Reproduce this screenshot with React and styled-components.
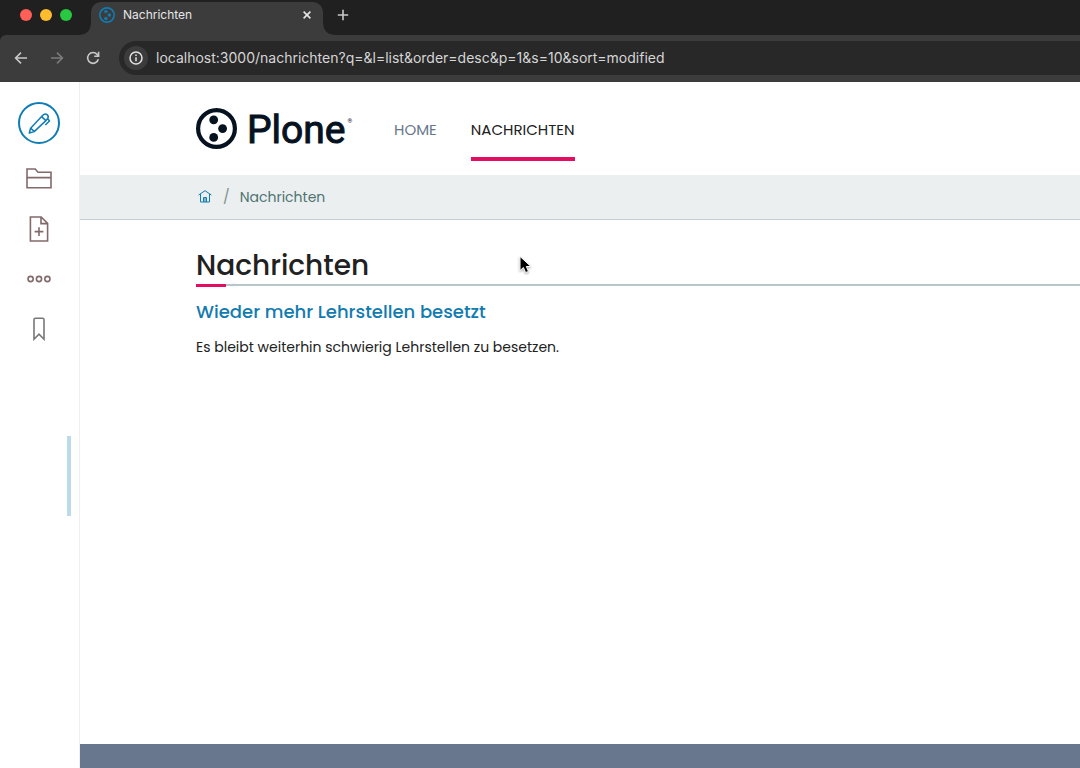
import React from 'react';
import styled, { createGlobalStyle, css } from 'styled-components';

const GlobalStyle = createGlobalStyle`
  *, *::before, *::after { box-sizing: border-box; }
  body {
    margin: 0;
    background: #fff;
    color: #212121;
    font-family: Poppins, Inter, "Open Sans", sans-serif;
    -webkit-font-smoothing: antialiased;
  }
  h1, h2, p, ol { margin: 0; padding: 0; }
  button { font: inherit; border: 0; padding: 0; background: none; color: inherit; cursor: pointer; }
  a { color: inherit; text-decoration: none; }
  svg { display: block; flex: none; }
`;

const Window = styled.div`
  min-height: 100vh;
  display: flex;
  flex-direction: column;
  overflow: hidden;
`;

const Chrome = styled.header`
  font-family: Inter, sans-serif;
  background: #202020;
`;

const TabStrip = styled.div`
  height: 35px;
  display: flex;
  padding-left: 20px;
`;

const Lights = styled.div`
  display: flex;
  gap: 8px;
  padding-top: 9px;
  width: 71px;
`;

const Light = styled.button`
  width: 12px;
  height: 12px;
  border-radius: 50%;
  background: ${(p) => p.$color};
`;

const Tab = styled.div`
  position: relative;
  width: 232px;
  margin-top: 2px;
  padding: 0 10px 8px 8px;
  display: flex;
  align-items: center;
  gap: 8px;
  border-radius: 10px 10px 0 0;
  background: #3c3c3c;
  color: #e6e6e6;
  font-size: 12px;
  line-height: 16px;

  &::before, &::after {
    content: "";
    position: absolute;
    bottom: 0;
    width: 10px;
    height: 10px;
  }
  &::before {
    right: 100%;
    background: radial-gradient(circle at 0 0, transparent 9px, #3c3c3c 10px);
  }
  &::after {
    left: 100%;
    background: radial-gradient(circle at 100% 0, transparent 9px, #3c3c3c 10px);
  }
`;

const TabTitle = styled.span`
  flex: 1;
`;

const NewTab = styled.button`
  align-self: flex-start;
  width: 40px;
  height: 30px;
  display: grid;
  place-items: center;
  color: #c8c8c8;
`;

const Toolbar = styled.div`
  height: 47px;
  padding: 6px 0 7px 11px;
  display: flex;
  align-items: center;
  gap: 16px;
  background: #3c3c3c;
  border-radius: 6px 0 0 0;
  color: #c8c8c8;
`;

const ToolButton = styled.button`
  width: 20px;
  height: 20px;
  display: grid;
  place-items: center;
  color: ${(p) => (p.disabled ? '#7c7c7c' : '#c8c8c8')};
`;

const AddressBar = styled.label`
  flex: 1;
  height: 34px;
  padding-left: 5px;
  display: flex;
  align-items: center;
  gap: 8px;
  border-radius: 17px 0 0 17px;
  background: #282828;
`;

const SiteInfo = styled.span`
  width: 24px;
  height: 24px;
  display: grid;
  place-items: center;
  border-radius: 50%;
  background: #3c3c3c;
  color: #e3e3e3;
`;

const Address = styled.input`
  flex: 1;
  min-width: 0;
  border: 0;
  padding: 0;
  outline: 0;
  background: transparent;
  color: #d6d6d6;
  font: 400 14px/20px Inter, sans-serif;
`;

const Body = styled.div`
  flex: 1;
  display: flex;
`;

const Sidebar = styled.aside`
  width: 80px;
  display: flex;
  border-right: 1px solid #eeeeee;
`;

const Tools = styled.div`
  flex: 1;
  padding: 20px 0 0 11px;
  display: flex;
  flex-direction: column;
  align-items: center;
`;

const SideTool = styled.button`
  width: 50px;
  height: 50px;
  display: grid;
  place-items: center;
  color: ${(p) => p.$color || '#826a6a'};
  ${(p) => p.$round && css`
    width: 42px;
    height: 42px;
    margin-bottom: 10px;
    border: 2px solid #0f7db5;
    border-radius: 50%;
  `}
`;

const Handle = styled.button`
  width: 4px;
  height: 80px;
  margin: 354px 8px 0 0;
  background: #bcdbe8;
`;

const Page = styled.div`
  flex: 1;
  min-width: 0;
  display: flex;
  flex-direction: column;
`;

const SiteHeader = styled.div`
  padding: 26px 116px 14px;
  display: flex;
  align-items: flex-end;
`;

const Logo = styled.a`
  display: flex;
  gap: 10px;
  margin: 0 40px 12px 0;
  height: 41px;
  width: 158px;
  color: #06121f;
`;

const Wordmark = styled.span`
  font: 400 39px/44px Roboto, sans-serif;
  -webkit-text-stroke: 1px currentColor;
`;

const Registered = styled.span`
  margin-left: -8px;
  font: 400 6px/8px Roboto, sans-serif;
  padding-top: 9px;
`;

const Nav = styled.nav`
  display: flex;
  gap: 34px;
`;

const NavLink = styled.a`
  padding-bottom: 15px;
  border-bottom: 4px solid ${(p) => (p.$active ? '#e30e62' : 'transparent')};
  color: ${(p) => (p.$active ? '#212121' : '#68778d')};
  font-size: 15px;
  line-height: 24px;
`;

const Breadcrumb = styled.nav`
  height: 45px;
  padding: 0 118px;
  display: flex;
  align-items: center;
  background: #ebeff0;
  border-bottom: 1px solid #c4d0d4;
  color: #4e7470;
  font-size: 14px;
  line-height: 20px;
`;

const Separator = styled.span`
  margin: 0 10px 0 11px;
  color: #7d918f;
`;

const Content = styled.main`
  flex: 1;
  padding: 28px 0 32px 116px;
`;

const Title = styled.h1`
  position: relative;
  border-bottom: 2px solid #b8c6c8;
  font-size: 28px;
  font-weight: 500;
  line-height: 36px;

  &::after {
    content: "";
    position: absolute;
    left: 0;
    top: 100%;
    width: 30px;
    height: 3px;
    background: #e30e62;
  }
`;

const ItemTitle = styled.h2`
  margin-top: 12px;
  color: #127bb0;
  font-size: 18px;
  font-weight: 500;
  line-height: 28px;
`;

const ItemText = styled.p`
  margin-top: 11px;
  font-size: 14px;
  line-height: 20px;
`;

const Footer = styled.footer`
  height: 24px;
  background: #68778d;
`;

const Pointer = styled.svg`
  position: absolute;
  left: 517px;
  top: 254px;
  pointer-events: none;
  filter: drop-shadow(0 1px 1px rgba(0, 0, 0, 0.35));
`;

const PloneMark = ({ size }) => (
  <svg width={size} height={size} viewBox="0 0 41 41" fill="none" aria-hidden="true">
    <circle cx="20.5" cy="20.5" r="18.4" stroke="currentColor" strokeWidth="4.2" />
    <g fill="currentColor">
      <circle cx="17.7" cy="11.8" r="4.4" />
      <circle cx="26.6" cy="20.6" r="4.4" />
      <circle cx="17.7" cy="29.4" r="4.4" />
    </g>
  </svg>
);

const Favicon = styled.span`
  color: #127bb0;
`;

const line = { fill: 'none', stroke: 'currentColor', strokeWidth: 1.6 };

export default function App() {
  return (
    <Window>
      <GlobalStyle />
      <Chrome>
        <TabStrip>
          <Lights>
            <Light $color="#ff5f57" aria-label="Close" />
            <Light $color="#febc2e" aria-label="Minimize" />
            <Light $color="#28c840" aria-label="Zoom" />
          </Lights>
          <Tab>
            <Favicon><PloneMark size={16} /></Favicon>
            <TabTitle>Nachrichten</TabTitle>
            <button aria-label="Close tab">
              <svg width="12" height="12" viewBox="0 0 12 12" {...line}><path d="M2.6 2.6l6.8 6.8M9.4 2.6L2.6 9.4" /></svg>
            </button>
          </Tab>
          <NewTab aria-label="New tab">
            <svg width="12" height="12" viewBox="0 0 12 12" {...line}><path d="M6 .8v10.4M.8 6h10.4" /></svg>
          </NewTab>
        </TabStrip>
        <Toolbar>
          <ToolButton aria-label="Back">
            <svg width="14" height="14" viewBox="0 0 14 14" {...line}><path d="M13 7H1.8M7 1.6L1.6 7 7 12.4" /></svg>
          </ToolButton>
          <ToolButton aria-label="Forward" disabled>
            <svg width="14" height="14" viewBox="0 0 14 14" {...line}><path d="M1 7h11.2M7 1.6L12.4 7 7 12.4" /></svg>
          </ToolButton>
          <ToolButton aria-label="Reload">
            <svg width="14" height="14" viewBox="0 0 14 14" {...line}><path d="M12.3 8.2A5.4 5.4 0 1 1 11.2 3.5L12.4 5M12.6 .8v4.5H8.2" /></svg>
          </ToolButton>
          <AddressBar>
            <SiteInfo>
              <svg width="14" height="14" viewBox="0 0 14 14" fill="none" stroke="currentColor" strokeWidth="1.5">
                <circle cx="7" cy="7" r="6" />
                <path d="M7 6.2v4M7 3.6v1.5" />
              </svg>
            </SiteInfo>
            <Address aria-label="Address" defaultValue="localhost:3000/nachrichten?q=&l=list&order=desc&p=1&s=10&sort=modified" />
          </AddressBar>
        </Toolbar>
      </Chrome>
      <Body>
        <Sidebar>
          <Tools>
            <SideTool $round $color="#0f7db5" aria-label="Edit">
              <svg width="24" height="24" viewBox="0 0 24 24" fill="none" stroke="currentColor" strokeWidth="1.5" strokeLinejoin="round">
                <path d="M2.3 22l1.3-4.8L14.6 5.6l4.3 4L7.2 20.6z" />
                <path d="M3.8 17.2l3.4 3.2M14.6 5.6l1.8-1.8c1-1 2.6-1 3.7-.1 1.300 1.100 1.400 2.800.4 4l-1.600 1.900M21 8l1.500 2-4.200 4" />
              </svg>
            </SideTool>
            <SideTool aria-label="Folder contents">
              <svg width="26" height="22" viewBox="0 0 26 22" {...line}>
                <path d="M1 19.8V1h8.2l2.8 3.2h13v15.6zM1 9.6h24" />
              </svg>
            </SideTool>
            <SideTool aria-label="Add">
              <svg width="20" height="26" viewBox="0 0 20 26" {...line}>
                <path d="M1.4 1h10.8l6.4 6.4V25H1.4zM12 1v6.6h6.6M10 11.2v8.8M5.6 15.6h8.8" />
              </svg>
            </SideTool>
            <SideTool aria-label="More">
              <svg width="24" height="8" viewBox="0 0 24 8" {...line}>
                <circle cx="3.6" cy="4" r="2.6" />
                <circle cx="12" cy="4" r="2.6" />
                <circle cx="20.4" cy="4" r="2.6" />
              </svg>
            </SideTool>
            <SideTool $color="#777777" aria-label="Bookmark">
              <svg width="12" height="24" viewBox="0 0 12 24" {...line}>
                <path d="M1 22.2V2.6C1 1.8 1.6 1.2 2.4 1.2h7.2c.8 0 1.4.6 1.4 1.4v19.6l-5-5z" />
              </svg>
            </SideTool>
          </Tools>
          <Handle aria-label="Collapse toolbar" />
        </Sidebar>
        <Page>
          <SiteHeader>
            <Logo href="#home">
              <PloneMark size={41} />
              <Wordmark>Plone</Wordmark>
              <Registered>®</Registered>
            </Logo>
            <Nav>
              <NavLink href="#home">HOME</NavLink>
              <NavLink href="#nachrichten" $active>NACHRICHTEN</NavLink>
            </Nav>
          </SiteHeader>
          <Breadcrumb aria-label="Breadcrumb">
            <a href="#home" aria-label="Home">
              <svg width="14" height="14" viewBox="0 0 14 14" fill="none" stroke="#127bb0" strokeWidth="1">
                <path d="M.6 5L7 .7 13.4 5M2.5 4v8h9V4M5.5 12V7.500h3V12M7 8v4" />
              </svg>
            </a>
            <Separator>/</Separator>
            <span>Nachrichten</span>
          </Breadcrumb>
          <Content>
            <Title>Nachrichten</Title>
            <article>
              <ItemTitle><a href="#lehrstellen">Wieder mehr Lehrstellen besetzt</a></ItemTitle>
              <ItemText>Es bleibt weiterhin schwierig Lehrstellen zu besetzen.</ItemText>
            </article>
          </Content>
          <Footer />
        </Page>
      </Body>
      <Pointer width="16" height="22" viewBox="0 0 16 22">
        <path d="M3 2.4v14.2l3.4-3.1 2.2 5.1 2.9-1.2-2.2-4.9h4.6z" fill="#000" stroke="#fff" strokeWidth="1" />
      </Pointer>
    </Window>
  );
}
